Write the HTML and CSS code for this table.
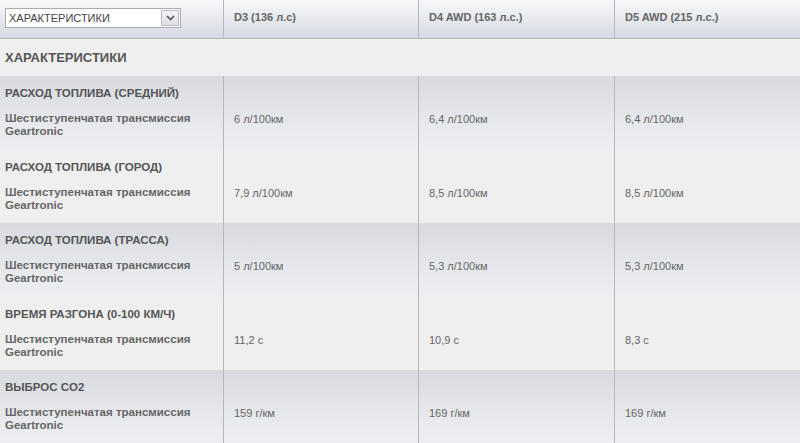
FILE: index.html
```html
<!DOCTYPE html>
<html>
<head>
	<title>Характеристики</title>
	<meta charset="utf-8">
	<link rel="stylesheet" href="styles.css">
</head>
<body>
	<div class="specs">
		<div class="row head">
			<div class="cell first">
				<div class="select">
					<span class="select-text">ХАРАКТЕРИСТИКИ</span>
					<span class="select-btn">
						<svg width="9" height="6" viewBox="0 0 9 6"><path d="M1 1 L4.5 4.5 L8 1" fill="none" stroke="#555" stroke-width="1.6"/></svg>
					</span>
				</div>
			</div>
			<div class="cell">D3 (136 л.с)</div>
			<div class="cell">D4 AWD (163 л.с.)</div>
			<div class="cell">D5 AWD (215 л.с.)</div>
		</div>
		<div class="section">ХАРАКТЕРИСТИКИ</div>

		<div class="row dark">
			<div class="cell first">
				<div class="label">РАСХОД ТОПЛИВА (СРЕДНИЙ)</div>
				<div class="sub">Шестиступенчатая трансмиссия Geartronic</div>
			</div>
			<div class="cell value">6 л/100км</div>
			<div class="cell value">6,4 л/100км</div>
			<div class="cell value">6,4 л/100км</div>
		</div>
		<div class="row light">
			<div class="cell first">
				<div class="label">РАСХОД ТОПЛИВА (ГОРОД)</div>
				<div class="sub">Шестиступенчатая трансмиссия Geartronic</div>
			</div>
			<div class="cell value">7,9 л/100км</div>
			<div class="cell value">8,5 л/100км</div>
			<div class="cell value">8,5 л/100км</div>
		</div>
		<div class="row dark">
			<div class="cell first">
				<div class="label">РАСХОД ТОПЛИВА (ТРАССА)</div>
				<div class="sub">Шестиступенчатая трансмиссия Geartronic</div>
			</div>
			<div class="cell value">5 л/100км</div>
			<div class="cell value">5,3 л/100км</div>
			<div class="cell value">5,3 л/100км</div>
		</div>
		<div class="row light">
			<div class="cell first">
				<div class="label">ВРЕМЯ РАЗГОНА (0-100 КМ/Ч)</div>
				<div class="sub">Шестиступенчатая трансмиссия Geartronic</div>
			</div>
			<div class="cell value">11,2 с</div>
			<div class="cell value">10,9 с</div>
			<div class="cell value">8,3 с</div>
		</div>
		<div class="row dark">
			<div class="cell first">
				<div class="label">ВЫБРОС CO2</div>
				<div class="sub">Шестиступенчатая трансмиссия Geartronic</div>
			</div>
			<div class="cell value">159 г/км</div>
			<div class="cell value">169 г/км</div>
			<div class="cell value">169 г/км</div>
		</div>
	</div>
</body>
</html>
```

FILE: styles.css
```css
*{margin:0;padding:0;box-sizing:border-box;}
html,body{overflow:hidden;}
body{background:#efefef;font-family:"Liberation Sans",Arial,sans-serif;font-size:11px;color:#666;}
.specs{width:808px;}
.row{display:grid;grid-template-columns:223px 195px 196px 194px;}
.cell{border-left:1px solid #b4b7bd;padding:0 10px;}
.cell.first{border-left:none;padding:0 5px;}

/* header */
.head{height:39px;background:linear-gradient(#f7f8fa,#d6dae2);border-bottom:1px solid #b1b5bc;}
.head .cell{display:flex;align-items:center;font-weight:bold;color:#666;padding-bottom:4px;}
.head .cell.first{padding-bottom:3px;}
.select{width:176px;height:20px;border:1px solid #a9abaf;background:#fff;display:flex;align-items:center;}
.select-text{flex:1;padding-left:3px;font-weight:normal;font-size:11px;color:#444;}
.select-btn{width:18px;height:16px;margin-right:1px;border:1px solid #b9bcc2;background:linear-gradient(#f3f4f6,#dcdfe4);display:flex;align-items:center;justify-content:center;}

.section{height:37px;line-height:37px;padding-left:5px;font-weight:bold;font-size:13px;color:#555;}

/* data rows */
.dark{height:74px;background:linear-gradient(#d8dadf,#e9eaee 70%,#eceef1);}
.light{height:73px;background:#efefef;}
.label{padding-top:10px;line-height:14px;font-size:11.5px;font-weight:bold;color:#555;}
.sub{margin-top:12px;width:200px;line-height:13px;font-size:11.5px;font-weight:bold;color:#666;}
.value{padding-top:37px;line-height:13px;color:#666;}
```
